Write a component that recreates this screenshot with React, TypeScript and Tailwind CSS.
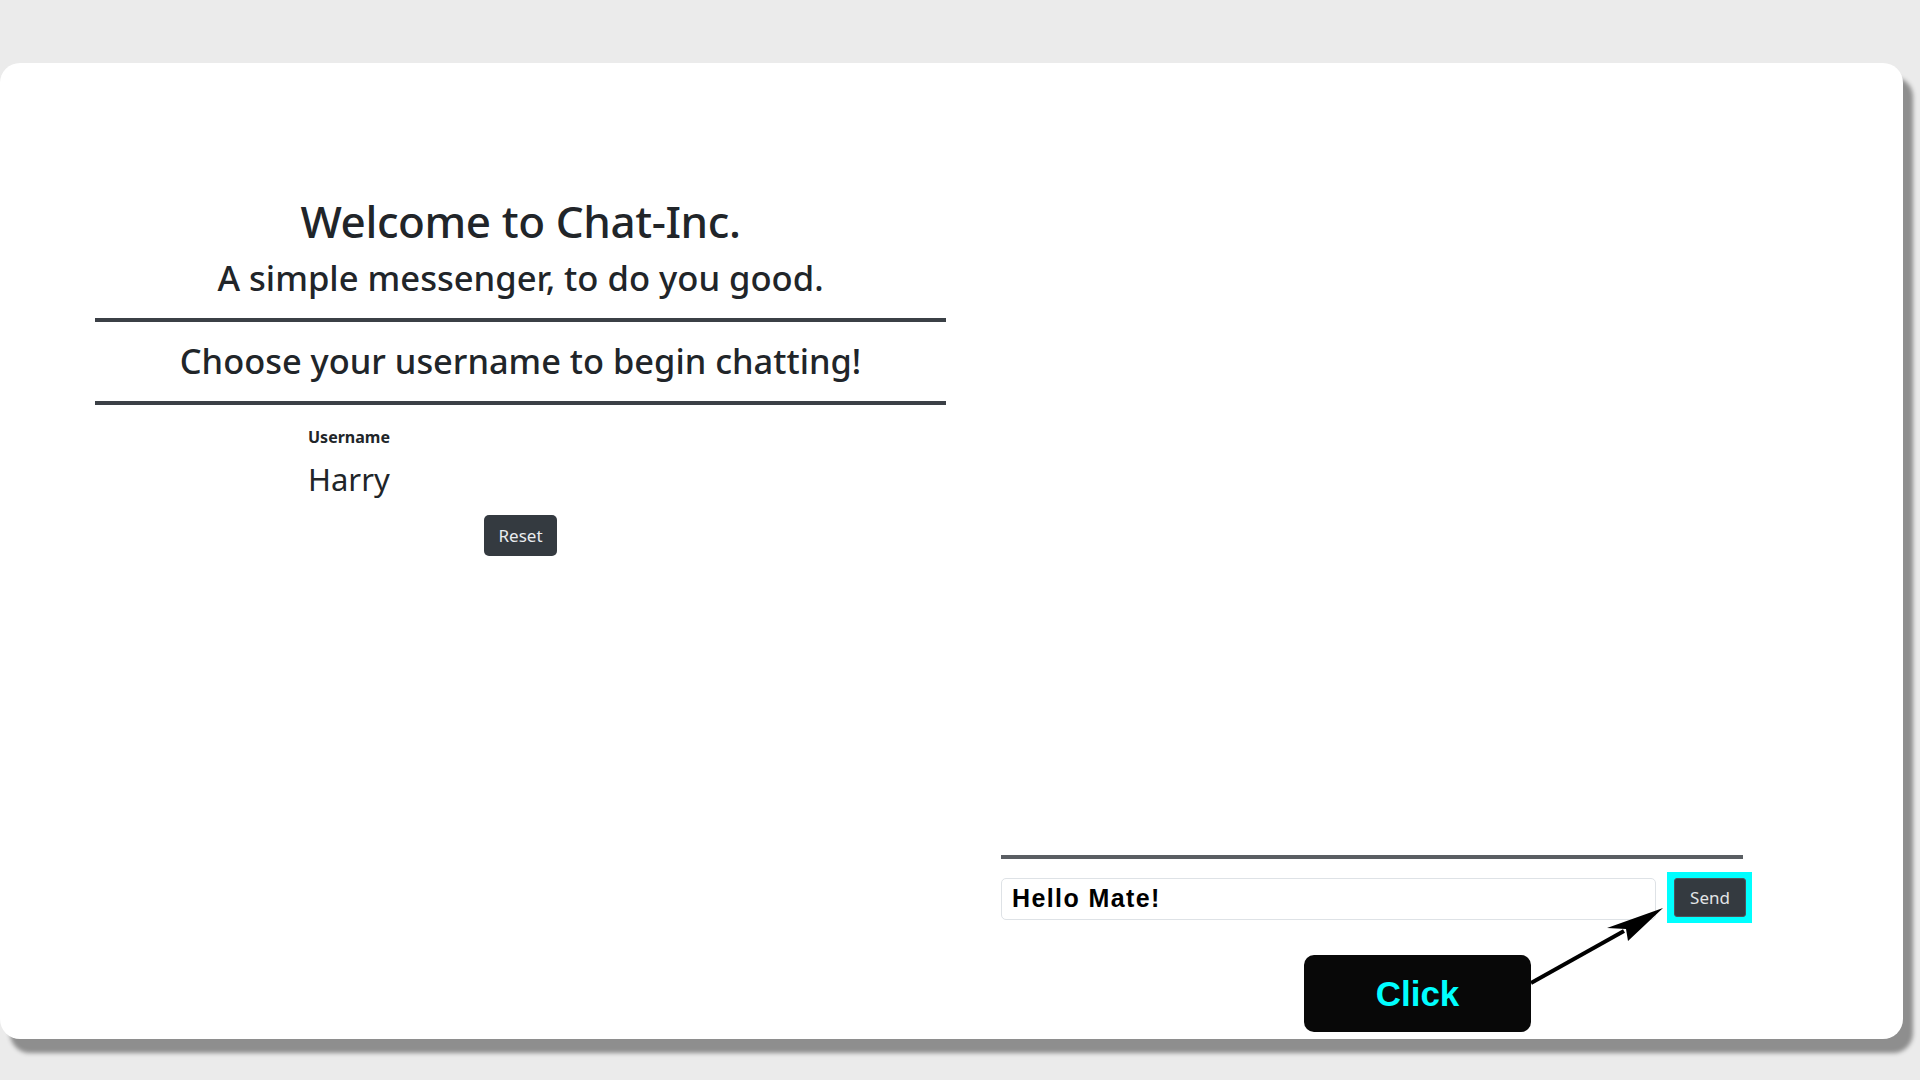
import React from "react";

export default function App() {
  return (
    <div className="w-[1920px] h-[1080px] overflow-hidden bg-[#ebebeb] pt-[63px] font-['Noto_Sans',sans-serif]">
      <div className="relative w-[1903px] h-[976px] bg-white rounded-[20px] shadow-[10px_14px_4px_#8e8e8e] flex">
        {/* Left column */}
        <div className="w-[851px] ml-[95px] pt-[136px] flex flex-col items-center text-[#212529]">
          <h1 className="text-[44px] leading-none font-medium tracking-[-0.4px]">Welcome to Chat-Inc.</h1>
          <h3 className="mt-[18px] text-[34.6px] leading-none font-medium">A simple messenger, to do you good.</h3>
          <div className="mt-[22px] w-full h-[4px] bg-[#3b4046]" />
          <h3 className="mt-[22px] text-[34.4px] leading-none font-medium">Choose your username to begin chatting!</h3>
          <div className="mt-[23px] w-full h-[4px] bg-[#3b4046]" />
          <div className="self-stretch pl-[213px] mt-[24px] flex flex-col">
            <div className="text-[16px] leading-none font-bold">Username</div>
            <div className="mt-[19px] text-[31px] leading-none">Harry</div>
          </div>
          <button className="mt-[20px] w-[73px] h-[41px] rounded-[5px] bg-[#343a40] text-[17px] text-[#e9ecef] flex items-center justify-center">
            Reset
          </button>
        </div>

        {/* Right column */}
        <div className="ml-[55px] w-[751px] flex flex-col justify-end pb-[119px]">
          <div className="w-[742px] h-[4px] bg-[#5a5e63]" />
          <div className="mt-[19px] flex items-start gap-[11px]">
            <div className="w-[655px] h-[42px] border border-[#dee2e6] rounded-[5px] flex items-center pl-[10px] font-['Liberation_Sans',Arial,sans-serif] font-bold text-[25px] tracking-[1.4px] text-black">
              Hello Mate!
            </div>
            <div className="-mt-[6px] -mb-[3px] bg-[#00ffff] pt-[6px] pb-[6px] pl-[7px] pr-[6px]">
              <button className="w-[72px] h-[39px] rounded-[3px] bg-[#343a40] border border-[#4d535a] text-[17px] text-[#e2e4e6] flex items-center justify-center">
                Send
              </button>
            </div>
          </div>
        </div>

        {/* Annotation: arrow */}
        <svg
          className="absolute left-[1520px] top-[832px]"
          width="160"
          height="100"
          viewBox="0 0 160 100"
        >
          <line x1="11" y1="88" x2="104" y2="36" stroke="#000" strokeWidth="4" />
          <polygon points="143,13 87,33 106,34 108,46" fill="#000" />
        </svg>

        {/* Annotation: Click box */}
        <div className="absolute left-[1304px] top-[892px] w-[227px] h-[77px] rounded-[10px] bg-[#080808] flex items-center justify-center">
          <span className="font-['Liberation_Sans',Arial,sans-serif] font-bold text-[35px] text-[#00ffff] leading-none">
            Click
          </span>
        </div>
      </div>
    </div>
  );
}
